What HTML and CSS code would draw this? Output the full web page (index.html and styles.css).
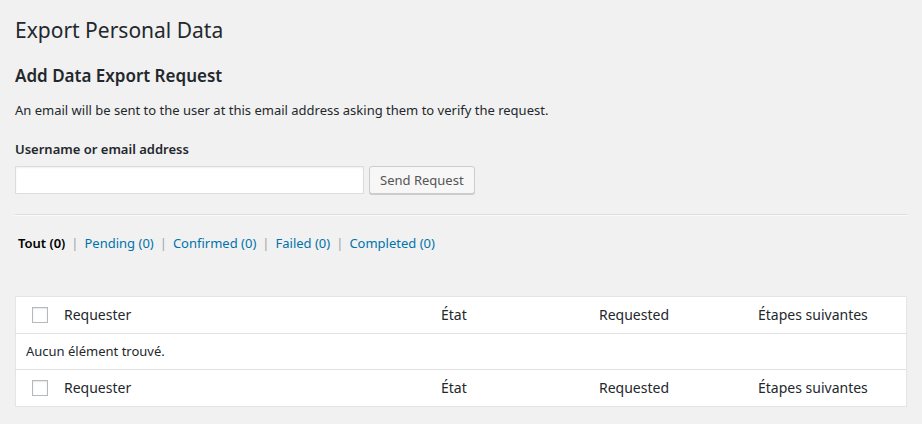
FILE: index.html
```html
<!DOCTYPE html>
<html lang="fr">
<head>
<meta charset="utf-8">
<title>Export Personal Data</title>
<link rel="stylesheet" href="styles.css">
</head>
<body>
<div class="wrap">
  <h1 class="page-title">Export Personal Data</h1>
  <h2 class="section-title">Add Data Export Request</h2>
  <p class="intro">An email will be sent to the user at this email address asking them to verify the request.</p>
  <label class="field-label" for="user">Username or email address</label>
  <div class="form-row">
    <input class="text-input" id="user" type="text">
    <button class="button" type="button">Send Request</button>
  </div>
  <hr class="separator">
  <ul class="subsubsub">
    <li class="current">Tout (0)</li>
    <li class="sep">|</li>
    <li><a href="#">Pending (0)</a></li>
    <li class="sep">|</li>
    <li><a href="#">Confirmed (0)</a></li>
    <li class="sep">|</li>
    <li><a href="#">Failed (0)</a></li>
    <li class="sep">|</li>
    <li><a href="#">Completed (0)</a></li>
  </ul>
  <table class="list-table">
    <thead>
      <tr>
        <td class="col-cb"><span class="checkbox"></span></td>
        <th class="col-requester">Requester</th>
        <th class="col-state">État</th>
        <th class="col-requested">Requested</th>
        <th class="col-next">Étapes suivantes</th>
      </tr>
    </thead>
    <tbody>
      <tr class="empty-row">
        <td colspan="5">Aucun élément trouvé.</td>
      </tr>
    </tbody>
    <tfoot>
      <tr>
        <td class="col-cb"><span class="checkbox"></span></td>
        <th class="col-requester">Requester</th>
        <th class="col-state">État</th>
        <th class="col-requested">Requested</th>
        <th class="col-next">Étapes suivantes</th>
      </tr>
    </tfoot>
  </table>
</div>
</body>
</html>
```

FILE: styles.css
```css
html, body {
  margin: 0;
  padding: 0;
  background: #f1f1f1;
}
body {
  font-family: "Noto Sans", "Liberation Sans", sans-serif;
  font-size: 13px;
  color: #23282d;
}
.wrap {
  padding: 0 15px 0 15px;
}
.page-title {
  font-size: 21px;
  font-weight: 400;
  margin: 0;
  padding: 16px 0 0;
  line-height: 28px;
}
.section-title {
  font-size: 17px;
  font-weight: 600;
  margin: 0;
  padding-top: 20px;
  line-height: 24px;
}
.intro {
  margin: 0;
  padding-top: 12px;
  line-height: 20px;
}
.field-label {
  display: block;
  font-weight: 600;
  padding-top: 19px;
  line-height: 20px;
}
.form-row {
  display: flex;
  gap: 5px;
  margin-top: 7px;
  height: 28px;
}
.text-input {
  width: 349px;
  height: 28px;
  box-sizing: border-box;
  border: 1px solid #ddd;
  box-shadow: inset 0 1px 2px rgba(0,0,0,0.07);
  background: #fff;
  margin: 0;
  padding: 3px 5px;
  font: inherit;
}
.button {
  height: 28px;
  box-sizing: border-box;
  padding: 0 10px;
  border: 1px solid #ccc;
  border-radius: 3px;
  background: #f7f7f7;
  box-shadow: 0 1px 0 #ccc;
  color: #555;
  font: inherit;
  font-size: 13px;
  margin: 0;
}
.separator {
  margin: 20px 0 0;
  border: 0;
  border-top: 1px solid #ddd;
  border-bottom: 1px solid #fafafa;
}
.subsubsub {
  list-style: none;
  margin: 17px 0 0;
  padding: 0 0 0 3px;
  display: flex;
  gap: 6px;
  line-height: 20px;
  color: #666;
}
.subsubsub .current {
  color: #000;
  font-weight: 600;
}
.subsubsub .sep {
  color: #a0a5aa;
}
.subsubsub a {
  color: #0073aa;
  text-decoration: none;
}
.list-table {
  margin-top: 43px;
  width: 892px;
  border-collapse: collapse;
  background: #fff;
  border: 1px solid #e5e5e5;
  box-shadow: 0 1px 1px rgba(0,0,0,0.04);
}
.list-table th,
.list-table td {
  text-align: left;
  font-weight: 400;
  padding: 8px 10px;
  line-height: 20px;
  height: 20px;
  font-size: 14px;
}
.list-table thead tr {
  border-bottom: 1px solid #e1e1e1;
}
.list-table tfoot tr {
  border-top: 1px solid #e1e1e1;
}
.list-table .empty-row td {
  font-size: 13px;
  line-height: 19px;
  height: 19px;
}
.col-cb {
  width: 16px;
  padding-left: 16px !important;
  padding-right: 6px !important;
}
.checkbox {
  display: block;
  width: 14px;
  height: 14px;
  border: 1px solid #b4b9be;
  border-radius: 0;
  background: #fff;
  box-shadow: inset 0 1px 2px rgba(0,0,0,0.1);
}
.col-requester { width: 357px; }
.col-state { width: 138px; }
.col-requested { width: 139px; }
```
